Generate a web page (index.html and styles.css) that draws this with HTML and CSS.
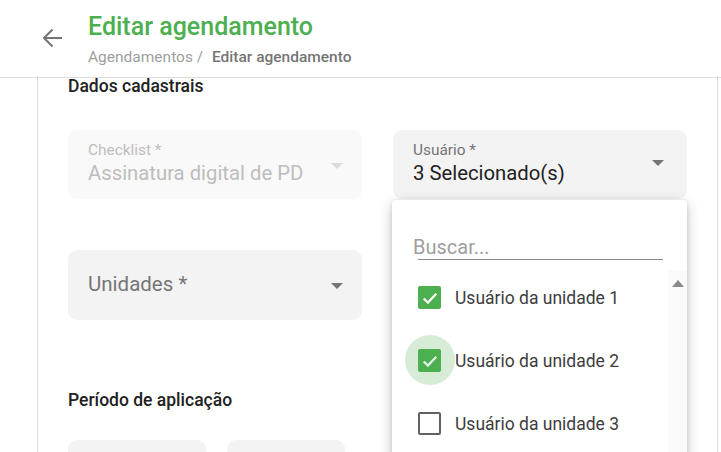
FILE: index.html
```html
<!DOCTYPE html>
<html lang="pt-BR">
<head>
<meta charset="utf-8">
<title>Editar agendamento</title>
<link rel="stylesheet" href="styles.css">
</head>
<body>
<header class="topbar">
  <button class="back" aria-label="Voltar">
    <svg width="22" height="22" viewBox="0 0 22 22"><path d="M21 11H3M11.5 2.5L3 11l8.5 8.5" fill="none" stroke="#757575" stroke-width="2"/></svg>
  </button>
  <div class="titles">
    <h1 class="title">Editar agendamento</h1>
    <div class="crumbs"><span class="crumb-link">Agendamentos /</span> <span class="crumb-current">Editar agendamento</span></div>
  </div>
</header>
<main class="main">
  <section class="card">
    <h2 class="section-title first">Dados cadastrais</h2>
    <div class="grid">
      <div class="field disabled">
        <div class="field-text">
          <span class="label">Checklist *</span>
          <span class="value">Assinatura digital de PD</span>
        </div>
        <span class="caret"></span>
      </div>
      <div class="field-wrap">
        <div class="field user">
          <div class="field-text">
            <span class="label">Usuário *</span>
            <span class="value dark">3 Selecionado(s)</span>
          </div>
          <span class="caret"></span>
        </div>
        <div class="menu">
          <div class="search">Buscar...</div>
          <div class="list-wrap">
            <ul class="list">
              <li class="item"><span class="box checked"><svg viewBox="0 0 24 24"><path d="M4.5 12.5l5 5L19.5 7" fill="none" stroke="#fff" stroke-width="2.6"/></svg></span>Usuário da unidade 1</li>
              <li class="item"><span class="ripple"></span><span class="box checked"><svg viewBox="0 0 24 24"><path d="M4.5 12.5l5 5L19.5 7" fill="none" stroke="#e3f2e4" stroke-width="2.6"/></svg></span>Usuário da unidade 2</li>
              <li class="item"><span class="box"></span>Usuário da unidade 3</li>
            </ul>
            <div class="scrollbar"><span class="up"></span></div>
          </div>
        </div>
      </div>
      <div class="field tall">
        <span class="placeholder">Unidades *</span>
        <span class="caret"></span>
      </div>
    </div>
    <h2 class="section-title period">Período de aplicação</h2>
    <div class="dates">
      <div class="date-field d1"></div>
      <div class="date-field d2"></div>
    </div>
  </section>
</main>
</body>
</html>
```

FILE: styles.css
```css
* { box-sizing: border-box; }
html, body { margin: 0; padding: 0; background: #fff; }
body {
  font-family: Roboto, "Liberation Sans", Arial, sans-serif;
  width: 721px;
  height: 452px;
  overflow: hidden;
}
.topbar {
  height: 78px;
  border-bottom: 1px solid #dcdcdc;
  display: flex;
  align-items: flex-start;
  padding-left: 41px;
}
.back {
  border: 0;
  background: none;
  padding: 0;
  margin-top: 27px;
  width: 22px;
  height: 22px;
  display: flex;
}
.titles { margin-left: 25px; padding-top: 12px; }
.title {
  margin: 0;
  font-size: 25px;
  line-height: 30px;
  font-weight: 500;
  color: #4caf50;
}
.crumbs {
  font-size: 15.5px;
  line-height: 18px;
  margin-top: 6px;
  color: #9e9e9e;
}
.crumb-current { color: #757575; font-weight: 500; margin-left: 5px; }

.main { padding: 0 3px 0 37px; }
.card {
  border-left: 1px solid #dcdcdc;
  border-right: 1px solid #dcdcdc;
  padding: 0 30px;
  height: 400px;
}
.section-title {
  margin: 0;
  font-size: 17.5px;
  font-weight: 500;
  line-height: 20px;
  color: #212121;
}
.section-title.first { margin-top: -2px; }
.grid {
  margin-top: 34px;
  display: grid;
  grid-template-columns: 294px 294px;
  column-gap: 31px;
  row-gap: 51px;
}
.field-wrap { position: relative; }
.field {
  height: 69px;
  background: #f3f3f3;
  border-radius: 9px;
  display: flex;
  align-items: center;
  justify-content: space-between;
  padding: 0 19px 0 20px;
}
.field.user { padding-right: 23px; }
.field.disabled { background: #f9f9f9; }
.field.tall { height: 70px; }
.field-text { display: flex; flex-direction: column; margin-top: -1px; }
.label { font-size: 15.4px; line-height: 18px; color: #757575; }
.value { font-size: 20.3px; line-height: 28px; color: #bdbdbd; }
.disabled .label { color: #bdbdbd; }
.value.dark { color: #212121; }
.placeholder { font-size: 20.5px; line-height: 24px; color: #757575; margin-top: -2px; }
.caret {
  width: 0; height: 0;
  border-left: 6px solid transparent;
  border-right: 6px solid transparent;
  border-top: 6px solid #757575;
}
.disabled .caret { border-top-color: #d9d9d9; margin-top: 2px; }
.user .caret { margin-top: -3px; }
.tall .caret { margin-top: 1px; }

.menu {
  position: absolute;
  top: 70px;
  left: -1px;
  width: 295px;
  height: 300px;
  background: #fff;
  border-radius: 4px 4px 0 0;
  box-shadow: 0 4px 14px rgba(0,0,0,0.22), 0 1px 4px rgba(0,0,0,0.12);
  z-index: 5;
}
.search {
  margin: 35px 0 0 26px;
  width: 245px;
  text-indent: -5px;
  font-size: 20px;
  line-height: 24px;
  color: #9e9e9e;
  border-bottom: 1px solid #8a8a8a;
}
.list-wrap {
  display: flex;
  margin-top: 6px;
}
.list {
  list-style: none;
  margin: 0;
  padding: 0;
  flex: 1;
}
.item {
  position: relative;
  display: flex;
  align-items: center;
  height: 63px;
  padding-left: 26px;
  font-size: 17.5px;
  color: #3d3d3d;
}
.box {
  position: relative;
  flex-shrink: 0;
  width: 23px;
  height: 23px;
  border: 2px solid #616161;
  border-radius: 2px;
  margin-right: 14px;
  z-index: 1;
}
.box.checked {
  background: #4caf50;
  border: 0;
  display: flex;
  align-items: center;
  justify-content: center;
}
.box svg { width: 20px; height: 20px; }
.ripple {
  position: absolute;
  left: 13px;
  top: 6px;
  width: 50px;
  height: 50px;
  border-radius: 50%;
  background: #d6ecd7;
}
.scrollbar {
  width: 19px;
  background: #fafafa;
  height: 200px;
  margin-top: 4px;
  display: flex;
  justify-content: center;
  padding-top: 10px;
}
.up {
  width: 0; height: 0;
  border-left: 6px solid transparent;
  border-right: 6px solid transparent;
  border-bottom: 7px solid #8a8a8a;
}
.period { margin-top: 70px; }
.dates { display: flex; gap: 21px; margin-top: 30px; }
.date-field {
  height: 60px;
  background: #f3f3f3;
  border-radius: 9px;
}
.d1 { width: 138px; }
.d2 { width: 118px; }
```
